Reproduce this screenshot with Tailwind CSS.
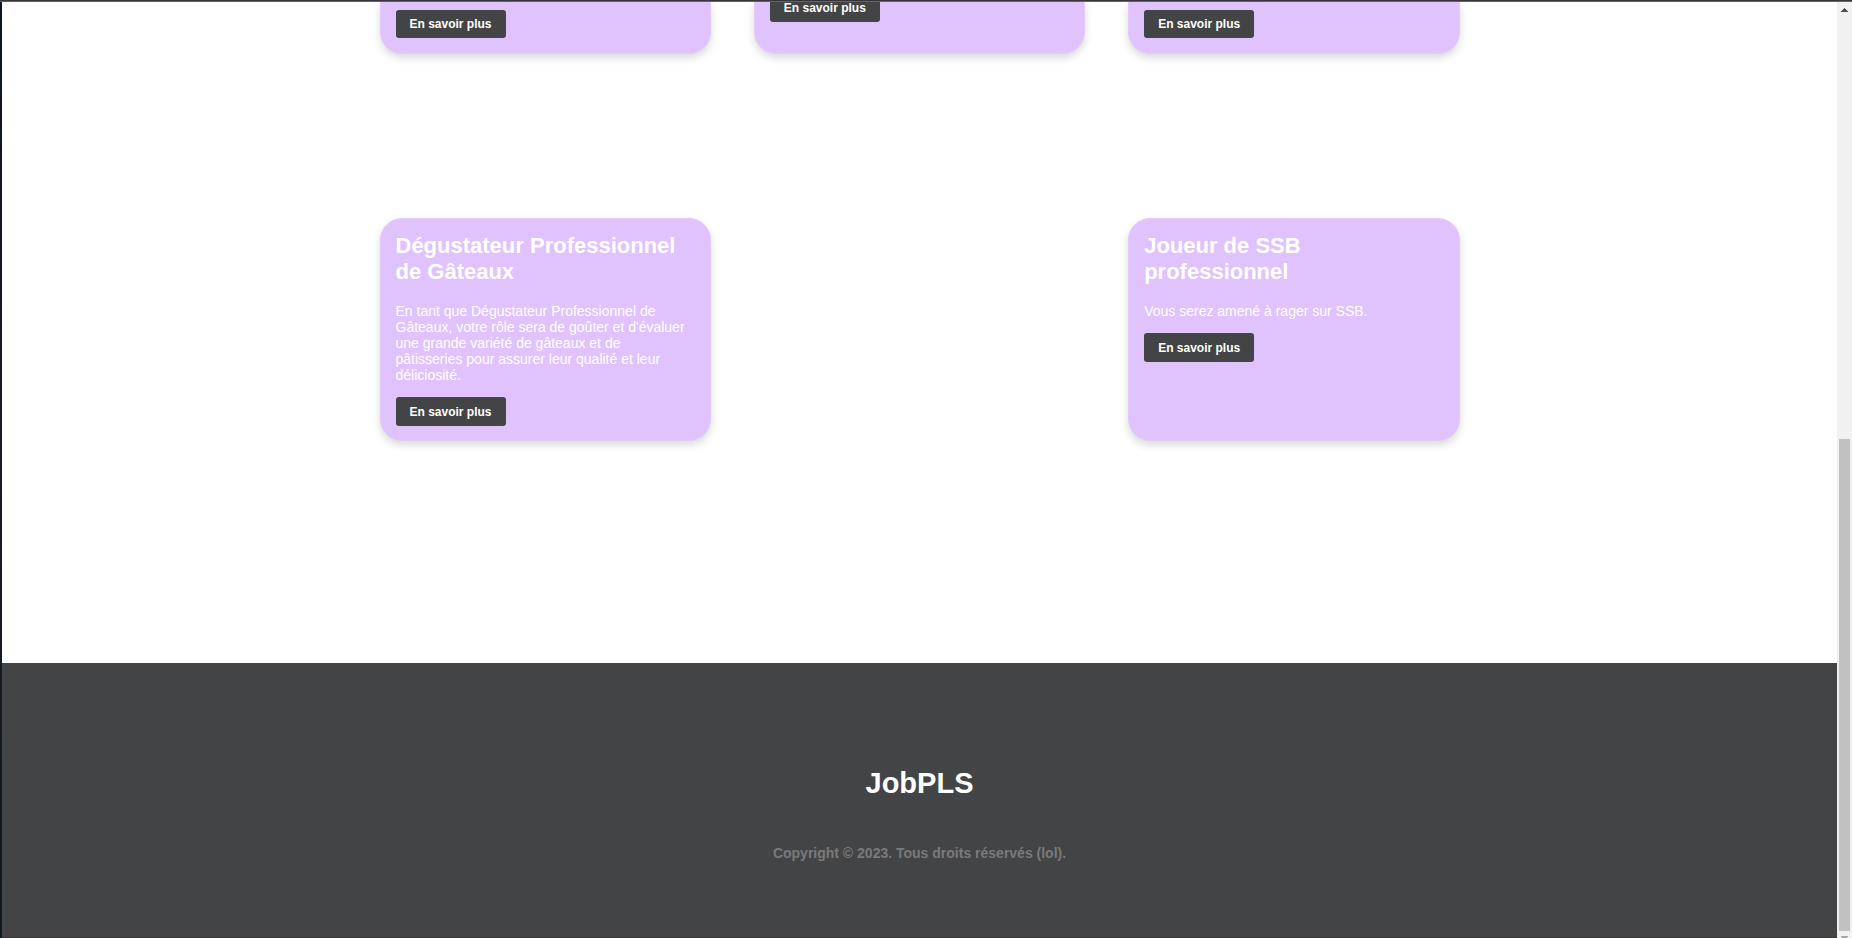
<!DOCTYPE html>
<html lang="fr">
<head>
<meta charset="utf-8">
<title>JobPLS</title>
<script src="https://cdn.jsdelivr.net/npm/@tailwindcss/browser@4"></script>
</head>
<body class="flex h-screen flex-col overflow-hidden bg-white font-['Liberation_Sans',Arial,sans-serif]">
<div class="h-[2px] shrink-0 border-b border-[#686268] bg-[#38353a]"></div>
<div class="flex min-h-0 flex-1">
  <div class="w-[2px] shrink-0 bg-linear-to-b from-[#0d1522] via-[#171c24] to-[#101920]"></div>
  <div class="flex min-w-0 flex-1 flex-col overflow-clip">
    <main class="mx-auto grid w-full max-w-[1080px] shrink-0 grid-cols-3 gap-x-[43px] gap-y-[164px]">
      <article class="rounded-b-[22px] border border-t-0 border-[#e3cafa] bg-[#e0c3fc] px-[15px] pt-2 pb-[15px] shadow-[0_4px_8px_rgba(0,0,0,0.15)]">
        <button class="block h-[28px] rounded-[3px] bg-[#434446] px-[14px] text-[12px] font-bold text-white">En savoir plus</button>
      </article>
      <article class="rounded-b-[22px] border border-t-0 border-[#e3cafa] bg-[#e0c3fc] px-[15px] pb-[15px] shadow-[0_4px_8px_rgba(0,0,0,0.15)]">
        <button class="-mt-2 block h-[28px] rounded-[3px] bg-[#434446] px-[14px] text-[12px] font-bold text-white">En savoir plus</button>
      </article>
      <article class="rounded-b-[22px] border border-t-0 border-[#e3cafa] bg-[#e0c3fc] px-[15px] pt-2 pb-[15px] shadow-[0_4px_8px_rgba(0,0,0,0.15)]">
        <button class="block h-[28px] rounded-[3px] bg-[#434446] px-[14px] text-[12px] font-bold text-white">En savoir plus</button>
      </article>
      <article class="rounded-[22px] border border-[#e3cafa] bg-[#e0c3fc] px-[15px] py-[14px] shadow-[0_4px_8px_rgba(0,0,0,0.15)]">
        <h2 class="text-[22px] leading-[26px] font-bold text-white">Dégustateur Professionnel de Gâteaux</h2>
        <p class="mt-[18px] text-[14px] leading-4 text-white">En tant que Dégustateur Professionnel de Gâteaux, votre rôle sera de goûter et d'évaluer une grande variété de gâteaux et de<br>pâtisseries pour assurer leur qualité et leur<br>déliciosité.</p>
        <button class="mt-[14px] block h-[29px] rounded-[3px] bg-[#434446] px-[14px] text-[12px] font-bold text-white">En savoir plus</button>
      </article>
      <article class="col-start-3 rounded-[22px] border border-[#e3cafa] bg-[#e0c3fc] px-[15px] py-[14px] shadow-[0_4px_8px_rgba(0,0,0,0.15)]">
        <h2 class="text-[22px] leading-[26px] font-bold text-white">Joueur de SSB<br>professionnel</h2>
        <p class="mt-[18px] text-[14px] leading-4 text-white">Vous serez amené à rager sur SSB.</p>
        <button class="mt-[14px] block h-[29px] rounded-[3px] bg-[#434446] px-[14px] text-[12px] font-bold text-white">En savoir plus</button>
      </article>
    </main>
    <footer class="mt-[222px] flex flex-1 flex-col items-center border-b border-[#3b3436] bg-[#434446] pt-[104px] text-center font-bold">
      <h2 class="text-[29px] leading-8 text-white">JobPLS</h2>
      <p class="mt-[46px] text-[14px] leading-4 text-[#7a7a7a]">Copyright © 2023. Tous droits réservés (lol).</p>
    </footer>
  </div>
  <div class="flex w-[15px] shrink-0 flex-col items-center overflow-hidden bg-[#f1f1f1]" aria-hidden="true">
    <svg class="mt-[6px] h-1 w-[7px] shrink-0" viewBox="0 0 7 4" shape-rendering="crispEdges"><path d="M3 0h1v1h1v1h1v1h1v1H0V3h1V2h1V1h1z" fill="#505050"/></svg>
    <div class="mt-[427px] w-[11px] flex-1 bg-[#c1c1c1]"></div>
    <svg class="mt-[5px] h-[2px] w-[7px] shrink-0" viewBox="0 0 7 2" shape-rendering="crispEdges"><path d="M0 0h7v1H6v1H1V1H0z" fill="#a3a3a3"/></svg>
  </div>
</div>
</body>
</html>
